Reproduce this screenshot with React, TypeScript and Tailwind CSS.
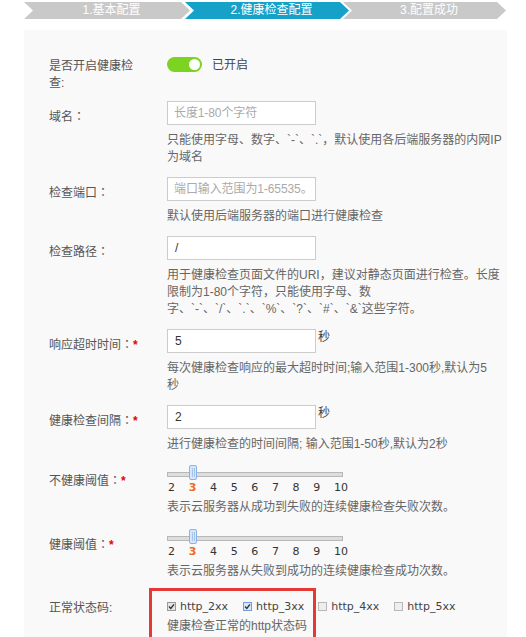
import type { ReactNode } from 'react'

function Step({ children, active, className }: { children: ReactNode; active?: boolean; className: string }) {
  return (
    <div
      className={
        'h-[17px] pl-[9px] text-center leading-[17px] text-white [clip-path:polygon(0_0,calc(100%_-_9px)_0,100%_50%,calc(100%_-_9px)_100%,0_100%,9px_50%)] ' +
        (active ? 'bg-[#16a1c9] ' : 'bg-[#c9c9c9] ') +
        className
      }
    >
      {children}
    </div>
  )
}

function Row({ label, colon, required, children, className, labelPad }: { label: string; colon?: boolean; required?: boolean; children: ReactNode; className: string; labelPad?: string }) {
  return (
    <div className={'flex ' + className}>
      <div className={'w-[118px] shrink-0 pr-[26px] ' + (labelPad ?? 'pt-[6px]')}>
        {label}
        {colon && <span className="[font-family:'Noto_Sans_CJK_TC',sans-serif]">：</span>}
        {required && <span className="font-bold text-[#e60012]">*</span>}
      </div>
      <div className="flex-1">{children}</div>
    </div>
  )
}

function Input({ value, placeholder }: { value?: string; placeholder?: string }) {
  return (
    <div className="h-[24px] w-[149px] overflow-hidden whitespace-nowrap border border-[#cccccc] bg-white pl-[7px] leading-[22px]">
      {value ? (
        <span className="text-[#333]">{value}</span>
      ) : (
        <span className="-ml-px tracking-[-0.1px] text-[#aaaaaa]">{placeholder}</span>
      )}
    </div>
  )
}

function Help({ children }: { children: ReactNode }) {
  return <div className="mt-[7px] whitespace-nowrap text-[#666]">{children}</div>
}

function Slider() {
  const nums = [2, 3, 4, 5, 6, 7, 8, 9, 10]
  return (
    <div>
      <div className="relative h-[15px] w-[176px]">
        <div className="absolute left-0 right-0 top-[7px] h-[5px] border border-[#b8b8b8] bg-[#dddddd]" />
        <div className="absolute left-[22px] top-0 flex h-[15px] w-[8px] items-center justify-center gap-px rounded-[2px] border border-[#8db2e6] bg-[#d5e5fa]">
          <span className="h-[9px] w-px bg-[#a7c4ec]" />
          <span className="h-[9px] w-px bg-[#a7c4ec]" />
        </div>
      </div>
      <div className="flex w-[181px] justify-between pl-px text-[11px] leading-[16px] text-[#333] [font-family:'DejaVu_Sans',sans-serif]">
        {nums.map((n) => (
          <span key={n} className={n === 3 ? 'font-bold text-[#f26a21]' : ''}>
            {n}
          </span>
        ))}
      </div>
    </div>
  )
}

function Check({ kind }: { kind: 'on' | 'focus' | 'off' }) {
  const box =
    kind === 'on'
      ? 'border-[#9a9a9a] bg-[#e4e4e4]'
      : kind === 'focus'
        ? 'border-[#6f9fe0] bg-[#dbe8f9]'
        : 'border-[#b8b8b8] bg-[#eeeeee]'
  return (
    <span className={'flex h-[9px] w-[9px] items-center justify-center border ' + box}>
      {kind !== 'off' && (
        <svg width="7" height="7" viewBox="0 0 7 7" fill="none">
          <path d="M1 3.6 L2.8 5.4 L6 1.4" stroke="#333" strokeWidth="1.4" />
        </svg>
      )}
    </span>
  )
}

export default function App() {
  return (
    <div className="min-h-screen bg-white text-[12px] leading-[17px] text-[#555] [font-family:'Liberation_Sans','Noto_Sans_CJK_SC',sans-serif]">
      <div className="flex pt-[2px]">
        <Step className="ml-[24px] w-[166px]">1.基本配置</Step>
        <Step className="-ml-[5px] w-[164px]" active>
          2.健康检查配置
        </Step>
        <Step className="-ml-[6px] w-[163px]">3.配置成功</Step>
      </div>

      <div className="ml-[24px] mt-[11px] w-[483px] bg-[#f9f9f9] pb-[30px] pl-[25px] pt-[26px]">
        <Row label="是否开启健康检查:" className="" labelPad="pt-[2px]">
          <div className="flex items-center">
            <span className="flex h-[15px] w-[35px] items-center justify-end rounded-full bg-[#7dd321] pr-[2px]">
              <span className="h-[11px] w-[11px] rounded-full bg-white" />
            </span>
            <span className="relative top-[1px] ml-[10px] text-[#444]">已开启</span>
          </div>
        </Row>

        <Row label="域名" colon className="mt-[9px]">
          <Input placeholder="长度1-80个字符" />
          <Help>
            只能使用字母、数字、`-`、`.`，默认使用各后端服务器的内网IP
            <br />
            为域名
          </Help>
        </Row>

        <Row label="检查端口" colon className="mt-[11px]">
          <Input placeholder="端口输入范围为1-65535。" />
          <Help>默认使用后端服务器的端口进行健康检查</Help>
        </Row>

        <Row label="检查路径" colon className="mt-[11px]">
          <Input value="/" />
          <Help>
            用于健康检查页面文件的URI，建议对静态页面进行检查。长度
            <br />
            限制为1-80个字符，只能使用字母、数
            <br />
            字、`-`、`/`、`.`、`%`、`?`、`#`、`&`这些字符。
          </Help>
        </Row>

        <Row label="响应超时时间" colon required className="mt-[11px] whitespace-nowrap">
          <div className="flex items-start">
            <Input value="5" />
            <span className="ml-[2px] text-[#444]">秒</span>
          </div>
          <Help>
            每次健康检查响应的最大超时时间;输入范围1-300秒,默认为5
            <br />
            秒
          </Help>
        </Row>

        <Row label="健康检查间隔" colon required className="mt-[11px] whitespace-nowrap">
          <div className="flex items-start">
            <Input value="2" />
            <span className="ml-[2px] text-[#444]">秒</span>
          </div>
          <Help>进行健康检查的时间间隔; 输入范围1-50秒,默认为2秒</Help>
        </Row>

        <Row label="不健康阈值" colon required className="mt-[12px] whitespace-nowrap">
          <Slider />
          <div className="mt-[3px] text-[#666]">表示云服务器从成功到失败的连续健康检查失败次数。</div>
        </Row>

        <Row label="健康阈值" colon required className="mt-[13px] whitespace-nowrap">
          <Slider />
          <div className="mt-[3px] text-[#666]">表示云服务器从失败到成功的连续健康检查成功次数。</div>
        </Row>

        <Row label="正常状态码:" className="mt-[18px]" labelPad="pt-[2px]">
          <div className="relative">
            <div className="absolute -left-[18px] -top-[10px] h-[62px] w-[167px] border-[3px] border-[#e53935]" />
            <div className="flex h-[17px] items-center text-[11px] text-[#444] [font-family:'DejaVu_Sans',sans-serif]">
              <Check kind="on" />
              <span className="ml-[4px]">http_2xx</span>
              <span className="ml-[15px]">
                <Check kind="focus" />
              </span>
              <span className="ml-[4px]">http_3xx</span>
              <span className="ml-[14px]">
                <Check kind="off" />
              </span>
              <span className="ml-[4px]">http_4xx</span>
              <span className="ml-[15px]">
                <Check kind="off" />
              </span>
              <span className="ml-[4px]">http_5xx</span>
            </div>
            <div className="mt-[3px] text-[#666]">健康检查正常的http状态码</div>
          </div>
        </Row>
      </div>
    </div>
  )
}
